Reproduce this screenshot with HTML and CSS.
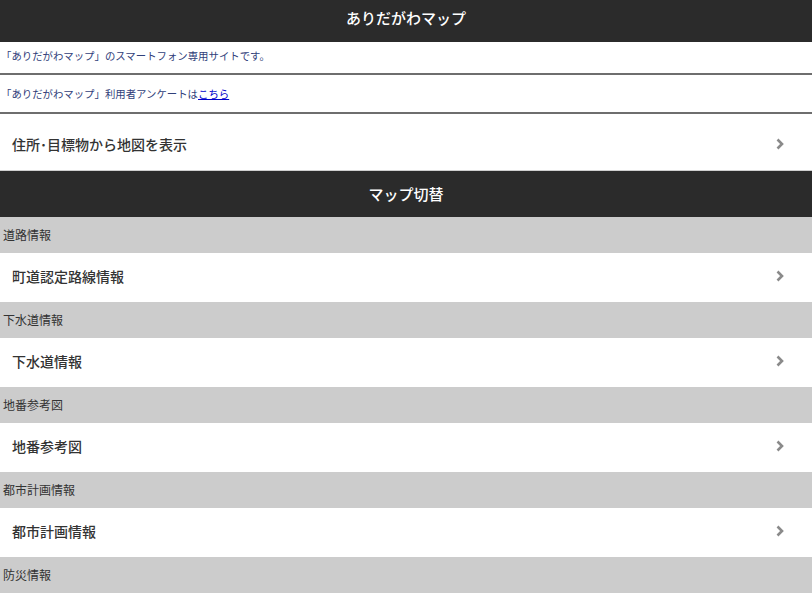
FILE: index.html
```html
<!DOCTYPE html>
<html lang="ja">
<head>
<meta charset="utf-8">
<title>ありだがわマップ</title>
<link rel="stylesheet" href="styles.css">
</head>
<body>
<header class="topbar"><h1 class="topbar-title">ありだがわマップ</h1></header>
<div class="notice notice-first">「ありだがわマップ」のスマートフォン専用サイトです。</div>
<div class="notice notice-second">「ありだがわマップ」利用者アンケートは<a class="notice-link" href="#">こちら</a></div>
<a class="item item-search" href="#"><span class="item-label">住所･目標物から地図を表示</span><svg class="chev" width="8" height="12" viewBox="0 0 8 12"><polyline points="1.5,1.5 6,6 1.5,10.5" fill="none" stroke="#8a8a8a" stroke-width="2.6"/></svg></a>
<div class="bar">マップ切替</div>
<div class="divider">道路情報</div>
<a class="item" href="#"><span class="item-label">町道認定路線情報</span><svg class="chev" width="8" height="12" viewBox="0 0 8 12"><polyline points="1.5,1.5 6,6 1.5,10.5" fill="none" stroke="#8a8a8a" stroke-width="2.6"/></svg></a>
<div class="divider">下水道情報</div>
<a class="item" href="#"><span class="item-label">下水道情報</span><svg class="chev" width="8" height="12" viewBox="0 0 8 12"><polyline points="1.5,1.5 6,6 1.5,10.5" fill="none" stroke="#8a8a8a" stroke-width="2.6"/></svg></a>
<div class="divider">地番参考図</div>
<a class="item" href="#"><span class="item-label">地番参考図</span><svg class="chev" width="8" height="12" viewBox="0 0 8 12"><polyline points="1.5,1.5 6,6 1.5,10.5" fill="none" stroke="#8a8a8a" stroke-width="2.6"/></svg></a>
<div class="divider">都市計画情報</div>
<a class="item" href="#"><span class="item-label">都市計画情報</span><svg class="chev" width="8" height="12" viewBox="0 0 8 12"><polyline points="1.5,1.5 6,6 1.5,10.5" fill="none" stroke="#8a8a8a" stroke-width="2.6"/></svg></a>
<div class="divider">防災情報</div>
<a class="item" href="#"><span class="item-label">防災情報</span><svg class="chev" width="8" height="12" viewBox="0 0 8 12"><polyline points="1.5,1.5 6,6 1.5,10.5" fill="none" stroke="#8a8a8a" stroke-width="2.6"/></svg></a>
</body>
</html>
```
FILE: styles.css
```css
html, body {
  margin: 0;
  padding: 0;
  background: #ffffff;
}
body {
  font-family: "Noto Sans CJK JP", "Noto Sans", sans-serif;
  color: #333333;
}
.topbar {
  background: #2b2b2b;
  height: 42px;
  display: flex;
  align-items: center;
  justify-content: center;
}
.topbar-title {
  margin: 0;
  padding-bottom: 7px;
  color: #ffffff;
  font-size: 15px;
  font-weight: 500;
  line-height: 1;
}
.notice {
  display: flex;
  padding-left: 1px;
  font-size: 10.4px;
  color: #30407a;
  border-bottom: 2px solid #6e6e6e;
}
.notice-first {
  align-items: flex-start;
  padding-top: 6px;
  height: 25px;
}
.notice-second {
  align-items: center;
  height: 37px;
}
.notice-link {
  color: #0000cc;
  text-decoration: underline;
}
.item {
  display: flex;
  align-items: center;
  justify-content: space-between;
  height: 46px;
  padding: 0 28px 3px 12px;
  background: #ffffff;
  color: #333333;
  text-decoration: none;
  font-size: 14px;
  font-weight: 500;
}
.item-search {
  height: 52px;
  padding-top: 4px;
  padding-bottom: 0;
  border-bottom: 1px solid #cfcfcf;
}
.item-label {
  line-height: 1;
}
.chev {
  display: block;
}
.bar {
  background: #2b2b2b;
  height: 44px;
  padding-bottom: 2px;
  display: flex;
  align-items: center;
  justify-content: center;
  color: #ffffff;
  font-size: 15px;
  font-weight: 500;
}
.divider {
  background: #cccccc;
  height: 35px;
  padding-bottom: 1px;
  display: flex;
  align-items: center;
  padding-left: 3px;
  font-size: 12px;
  color: #333333;
}
```
